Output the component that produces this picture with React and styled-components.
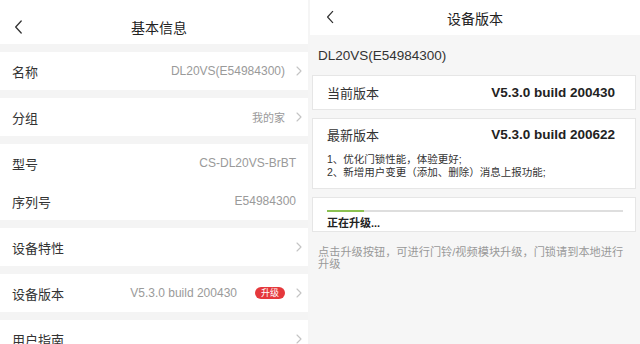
import styled, { createGlobalStyle } from 'styled-components';

const GlobalStyle = createGlobalStyle`
  html, body {
    margin: 0;
    padding: 0;
    background: #f5f5f5;
  }
  body {
    font-family: 'Liberation Sans', 'Noto Sans CJK SC', sans-serif;
  }
`;

const BackIcon = ({ size = 14 }) => (
  <svg width={size * 0.6} height={size} viewBox='0 0 8 14' fill='none'>
    <path d='M7 1L1.5 7L7 13' stroke='#333' strokeWidth='1.3' strokeLinecap='round' strokeLinejoin='round' />
  </svg>
);

const Chevron = () => (
  <svg width='6' height='10' viewBox='0 0 6 10' fill='none'>
    <path d='M1 1L5 5L1 9' stroke='#c4c4c4' strokeWidth='1.1' strokeLinecap='round' strokeLinejoin='round' />
  </svg>
);

const infoGroups = [
  [{ label: '名称', value: 'DL20VS(E54984300)', arrow: true }],
  [{ label: '分组', value: '我的家', arrow: true, small: true }],
  [
    { label: '型号', value: 'CS-DL20VS-BrBT' },
    { label: '序列号', value: 'E54984300' },
  ],
  [{ label: '设备特性', arrow: true }],
  [{ label: '设备版本', value: 'V5.3.0 build 200430', badge: '升级', arrow: true }],
  [{ label: '用户指南', arrow: true }],
];

const App = () => {
  return (
    <>
      <GlobalStyle />
      <Screen>
        <LeftPane>
          <Header $top={9}>
            <BackButton $left={14} $top={27}>
              <BackIcon size={14} />
            </BackButton>
            <HeaderTitle $shift={10}>基本信息</HeaderTitle>
          </Header>
          {infoGroups.map((group, gi) => (
            <Group key={gi}>
              {group.map((row) => (
                <Row key={row.label} $arrow={row.arrow}>
                  <Label>{row.label}</Label>
                  {row.value && (
                    <Value $small={row.small} $gap={row.badge ? 18 : 0}>
                      {row.value}
                    </Value>
                  )}
                  {row.badge && <Badge>{row.badge}</Badge>}
                  {row.arrow && (
                    <ArrowSlot>
                      <Chevron />
                    </ArrowSlot>
                  )}
                </Row>
              ))}
            </Group>
          ))}
        </LeftPane>

        <RightPane>
          <RightHeader>
            <BackButton $left={16} $top={17}>
              <BackIcon size={13} />
            </BackButton>
            <HeaderTitle>设备版本</HeaderTitle>
          </RightHeader>
          <DeviceName>DL20VS(E54984300)</DeviceName>
          <Card>
            <CardHead>
              <CardLabel>当前版本</CardLabel>
              <CardValue>V5.3.0 build 200430</CardValue>
            </CardHead>
          </Card>
          <Card $padBottom={9}>
            <CardHead $height={30}>
              <CardLabel>最新版本</CardLabel>
              <CardValue>V5.3.0 build 200622</CardValue>
            </CardHead>
            <Notes>
              <div>1、优化门锁性能，体验更好;</div>
              <div>2、新增用户变更（添加、删除）消息上报功能;</div>
            </Notes>
          </Card>
          <Card $progress>
            <Track>
              <Fill style={{ width: '12.5%' }} />
            </Track>
            <Status>正在升级...</Status>
          </Card>
          <Hint>点击升级按钮，可进行门铃/视频模块升级，门锁请到本地进行升级</Hint>
        </RightPane>
      </Screen>
    </>
  );
};

export default App;

const Screen = styled.div`
  width: 640px;
  height: 344px;
  display: flex;
  overflow: hidden;
  background: #f5f5f5;
`;

const LeftPane = styled.div`
  width: 308px;
  flex-shrink: 0;
  display: flex;
  flex-direction: column;
  background: #f4f4f4;
  margin-right: 2px;
`;

const Header = styled.div`
  height: 44px;
  box-sizing: border-box;
  padding-top: ${(p) => p.$top ?? 0}px;
  flex-shrink: 0;
  background: #fff;
  display: flex;
  align-items: center;
  justify-content: center;
  position: relative;
`;

const RightHeader = styled(Header)`
  height: 35px;
`;

const BackButton = styled.div`
  position: absolute;
  left: ${(p) => p.$left}px;
  top: ${(p) => p.$top}px;
  transform: translateY(-50%);
  display: flex;
`;

const HeaderTitle = styled.div`
  font-size: 14px;
  color: #222;
  padding-left: ${(p) => p.$shift ?? 0}px;
`;

const Group = styled.div`
  margin-top: 8px;
  background: #fff;
  display: flex;
  flex-direction: column;
`;

const Row = styled.div`
  height: 38px;
  display: flex;
  align-items: center;
  padding: 0 ${(p) => (p.$arrow ? 6 : 12)}px 0 12px;
`;

const Label = styled.div`
  font-size: 13px;
  color: #333;
  flex: 1;
`;

const Value = styled.div`
  font-size: ${(p) => (p.$small ? 11 : 12)}px;
  color: #9a9a9a;
  margin-right: ${(p) => p.$gap}px;
`;

const Badge = styled.div`
  font-size: 9px;
  color: #fff;
  background: #e5383c;
  border-radius: 6px;
  padding: 0 6px;
  height: 12px;
  line-height: 12px;
`;

const ArrowSlot = styled.div`
  width: 14px;
  display: flex;
  justify-content: flex-end;
  padding-left: 3px;
`;

const RightPane = styled.div`
  flex: 1;
  display: flex;
  flex-direction: column;
  background: #f6f6f6;
`;

const DeviceName = styled.div`
  height: 40px;
  display: flex;
  align-items: center;
  padding-left: 8px;
  font-size: 13.5px;
  color: #333;
`;

const Card = styled.div`
  margin: 0 4px 8px 2px;
  background: #fff;
  border: 1px solid #e6e6e6;
  padding: ${(p) => (p.$progress ? '12px 12px 1px 14px' : `0 20px ${p.$padBottom ?? 0}px 14px`)};
`;

const CardHead = styled.div`
  height: ${(p) => p.$height ?? 33}px;
  display: flex;
  align-items: center;
  justify-content: space-between;
`;

const CardLabel = styled.div`
  font-size: 13px;
  color: #333;
`;

const CardValue = styled.div`
  font-size: 13.5px;
  font-weight: bold;
  color: #222;
`;

const Notes = styled.div`
  margin-top: 4px;
  font-size: 10.5px;
  line-height: 13px;
  color: #333;
`;

const Track = styled.div`
  height: 2px;
  background: #dedede;
`;

const Fill = styled.div`
  height: 100%;
  background: #8cc152;
`;

const Status = styled.div`
  margin-top: 5px;
  font-size: 11px;
  line-height: 13px;
  font-weight: bold;
  color: #222;
`;

const Hint = styled.div`
  padding: 6px 10px 0 8px;
  font-size: 11.2px;
  line-height: 12px;
  color: #999;
`;
